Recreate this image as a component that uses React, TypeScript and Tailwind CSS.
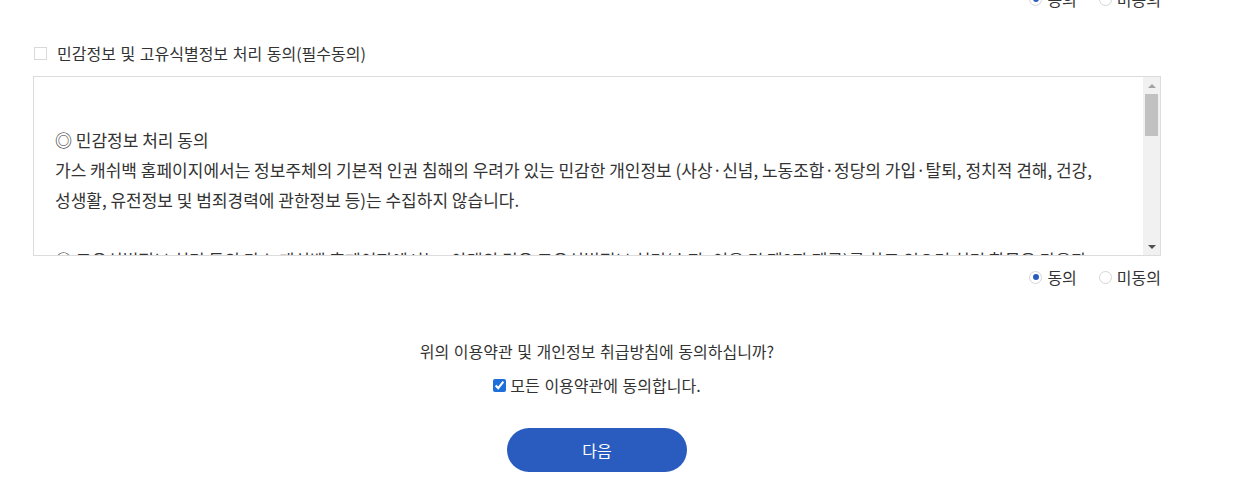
import React from 'react';

const font = { fontFamily: '"Noto Sans CJK KR", "Noto Sans", sans-serif' };

function Radio({ checked, label }: { checked?: boolean; label: string }) {
  return (
    <label className="flex items-center gap-[5px] cursor-pointer">
      <span className="w-[13px] h-[13px] rounded-full border border-[#d6d6d6] bg-white flex items-center justify-center">
        {checked && <span className="w-[6px] h-[6px] rounded-full bg-[#2a5cbf]" />}
      </span>
      <span>{label}</span>
    </label>
  );
}

function AgreeRow({ className = '' }: { className?: string }) {
  return (
    <div className={`flex justify-end items-center gap-[22px] h-[30px] text-[16px] text-[#333] [word-spacing:1px] ${className}`}>
      <Radio checked label="동의" />
      <Radio label="미동의" />
    </div>
  );
}

// fake classic scrollbar (up arrow, thumb, down arrow)
function ScrollBar() {
  return (
    <div className="w-[17px] shrink-0 bg-[#f1f1f1] flex flex-col">
      <div className="h-[17px] flex items-center justify-center">
        <span className="w-0 h-0 border-x-[4px] border-x-transparent border-b-[4px] border-b-[#a3a3a3]" />
      </div>
      <div className="flex-1 px-[2px]">
        <div className="h-[42px] bg-[#c1c1c1]" />
      </div>
      <div className="h-[17px] flex items-center justify-center">
        <span className="w-0 h-0 border-x-[4px] border-x-transparent border-t-[4px] border-t-[#505050]" />
      </div>
    </div>
  );
}

export default function App() {
  return (
    <div className="w-[1246px] h-[485px] overflow-hidden bg-white" style={font}>
      <div className="ml-[33px] w-[1128px] flex flex-col">
        {/* previous section agree (scrolled off) */}
        <AgreeRow className="-mt-[16px]" />

        {/* Sensitive info title */}
        <label className="mt-[30px] flex items-center gap-[10px] h-[18px] text-[16px] text-[#333] [word-spacing:1px]">
          <span className="ml-[1px] w-[13px] h-[13px] border border-[#d9d9d9] bg-white" />
          <span>민감정보 및 고유식별정보 처리 동의(필수동의)</span>
        </label>

        <div className="mt-[14px] h-[180px] border border-[#dcdcdc] flex">
          <div className="flex-1 overflow-hidden pl-[21px] pr-[20px] pt-[18px] text-[17px] leading-[30px] text-[#333] break-keep">
            <p>&nbsp;</p>
            <p>◎ 민감정보 처리 동의</p>
            <p>
              가스 캐쉬백 홈페이지에서는 정보주체의 기본적 인권 침해의 우려가 있는 민감한 개인정보 (사상·신념, 노동조합·정당의 가입·탈퇴, 정치적 견해, 건강, 성생활, 유전정보 및 범죄경력에 관한정보 등)는 수집하지 않습니다.
            </p>
            <p>&nbsp;</p>
            <p>
              ◎ 고유식별정보 처리 동의 가스 캐쉬백 홈페이지에서는 , 아래의 경우 고유식별정보 처리(수집·이용 및 제3자 제공)를 하고 있으며 처리 항목은 다음과 같습니다.
            </p>
            <p>- 처리 목적 : 본인확인 및 중복가입 확인, 캐쉬백 포인트 지급 및 정산</p>
            <p>- 처리 항목 : 주민등록번호(생년월일), 외국인등록번호</p>
          </div>
          <ScrollBar />
        </div>

        <AgreeRow className="mt-[6px]" />

        {/* final agreement */}
        <div className="mt-[44px] flex flex-col items-center text-[16px] text-[#333] [word-spacing:1px]">
          <p className="leading-[30px]">위의 이용약관 및 개인정보 취급방침에 동의하십니까?</p>
          <label className="mt-[4px] flex items-center gap-[4px] h-[30px]">
            <input type="checkbox" defaultChecked className="w-[13px] h-[13px] m-0 accent-[#1e6fd9]" />
            <span>모든 이용약관에 동의합니다.</span>
          </label>
          <button className="mt-[28px] w-[180px] h-[44px] rounded-full bg-[#2a5cbf] text-white text-[16px]">
            다음
          </button>
        </div>
      </div>
    </div>
  );
}
